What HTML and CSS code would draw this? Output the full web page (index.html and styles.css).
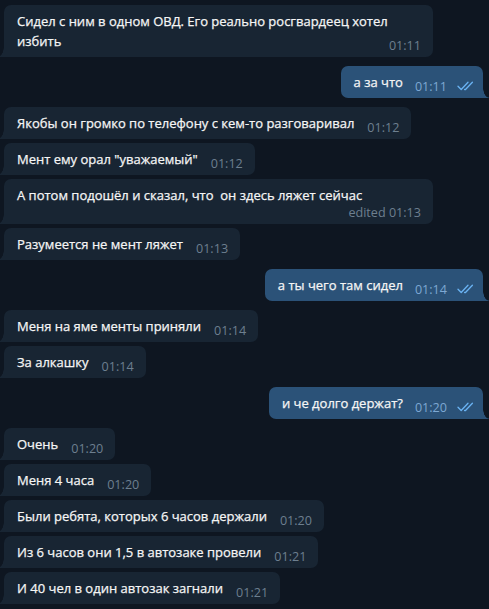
FILE: index.html
```html
<!DOCTYPE html>
<html lang="ru">
<head>
  <meta charset="UTF-8">
  <title>Чат</title>
  <link rel="stylesheet" href="styles.css">
</head>
<body>

  <div class="chat">

    <div class="group in">
      <div class="bubble">Сидел с ним в одном ОВД. Его реально росгвардеец хотел избить<span class="meta">01:11</span></div>
    </div>

    <div class="group out">
      <div class="bubble">а за что<span class="meta">01:11<svg class="check" viewBox="0 0 18 10"><path d="M1 5.2l3.2 3.3L11 1.2M7.6 8.5l0.9 0L15.4 1.2"/></svg></span></div>
    </div>

    <div class="group in">
      <div class="bubble">Якобы он громко по телефону с кем-то разговаривал<span class="meta">01:12</span></div>
      <div class="bubble">Мент ему орал "уважаемый"<span class="meta">01:12</span></div>
      <div class="bubble">А потом подошёл и сказал, что&nbsp; он здесь ляжет сейчас<span class="meta meta-below">edited 01:13</span></div>
      <div class="bubble">Разумеется не мент ляжет<span class="meta">01:13</span></div>
    </div>

    <div class="group out">
      <div class="bubble">а ты чего там сидел<span class="meta">01:14<svg class="check" viewBox="0 0 18 10"><path d="M1 5.2l3.2 3.3L11 1.2M7.6 8.5l0.9 0L15.4 1.2"/></svg></span></div>
    </div>

    <div class="group in">
      <div class="bubble">Меня на яме менты приняли<span class="meta">01:14</span></div>
      <div class="bubble">За алкашку<span class="meta">01:14</span></div>
    </div>

    <div class="group out">
      <div class="bubble">и че долго держат?<span class="meta">01:20<svg class="check" viewBox="0 0 18 10"><path d="M1 5.2l3.2 3.3L11 1.2M7.6 8.5l0.9 0L15.4 1.2"/></svg></span></div>
    </div>

    <div class="group in">
      <div class="bubble">Очень<span class="meta">01:20</span></div>
      <div class="bubble">Меня 4 часа<span class="meta">01:20</span></div>
      <div class="bubble">Были ребята, которых 6 часов держали<span class="meta">01:20</span></div>
      <div class="bubble">Из 6 часов они 1,5 в автозаке провели<span class="meta">01:21</span></div>
      <div class="bubble">И 40 чел в один автозак загнали<span class="meta">01:21</span></div>
    </div>

  </div>

</body>
</html>
```

FILE: styles.css
```css
/* общий фон чата */
body {
  margin: 0;
  background: #0e1621;
  font-family: "Open Sans", "Liberation Sans", sans-serif;
  color: #f5f5f5;
}

.chat {
  display: flex;
  flex-direction: column;
  gap: 9px;
  padding: 5px 6px 0 4px;
}

/* группа сообщений одного автора */
.group {
  display: flex;
  flex-direction: column;
  gap: 4px;
  align-items: flex-start;
}
.group.out {
  align-items: flex-end;
}

/* пузырь сообщения */
.bubble {
  position: relative;
  display: flow-root;
  max-width: 429px;
  box-sizing: border-box;
  padding: 6px 12px 6px 13px;
  font-size: 13px;
  line-height: 20px;
  -webkit-text-stroke: 0.25px #f5f5f5;
  background: #182533;
  border-radius: 7px 7px 7px 0;
}
.bubble::before {
  content: "";
  position: absolute;
  bottom: 0;
  left: -6px;
  width: 6px;
  height: 10px;
  background: radial-gradient(ellipse 6px 10px at 0 0, transparent 92%, #182533 100%);
}

.out .bubble {
  background: #2b5278;
  border-radius: 7px 7px 0 7px;
  padding-right: 8px;
}
.out .bubble::before {
  left: auto;
  right: -6px;
  background: radial-gradient(ellipse 6px 10px at 100% 0, transparent 92%, #2b5278 100%);
}

/* время и галочки */
.meta {
  float: right;
  margin: 5px 0 -5px 13px;
  font-size: 12.6px;
  color: #6d7f8f;
  -webkit-text-stroke: 0;
  white-space: nowrap;
}
.meta-below {
  margin-top: -2px;
}
.out .meta {
  margin-left: 12px;
  color: #7da8d3;
}

.check {
  width: 18px;
  height: 10px;
  margin-left: 10px;
  fill: none;
  stroke: #6ab3f3;
  stroke-width: 1.3;
  stroke-linecap: round;
  stroke-linejoin: round;
}
```
